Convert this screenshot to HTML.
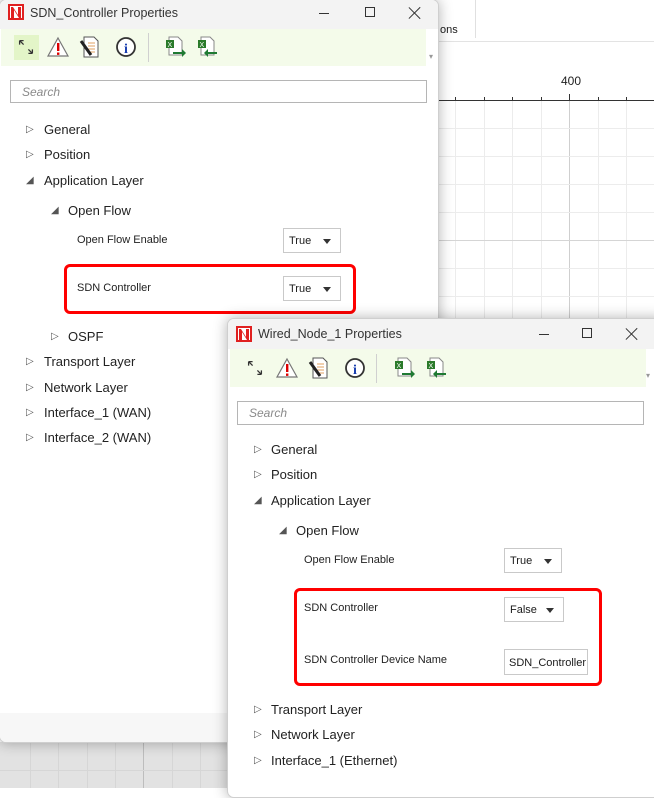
<!DOCTYPE html>
<html><head><meta charset="utf-8"><style>
*{margin:0;padding:0;box-sizing:border-box}
body{width:654px;height:788px;overflow:hidden;background:#fff;font-family:"Liberation Sans","DejaVu Sans",sans-serif;position:relative;color:#1a1a1a}
.a{position:absolute}
.vl{position:absolute;top:42px;width:1px;background:#ececec}
.hl{position:absolute;left:438px;height:1px;background:#ececec;width:216px}
.win{position:absolute;background:#fff;box-shadow:0 0 14px rgba(0,0,0,.3);border:1px solid #cfcfcf;border-radius:7px;overflow:hidden}
.title{position:absolute;left:0;top:0;right:0;height:29px;background:#f3f3f3;font-size:12.5px;color:#333}
.tb{position:absolute;background:#f4fbea}
.srch{position:absolute;border:1px solid #b5b5b5;background:#fff;font-size:12px;font-style:italic;color:#8a8a8a;padding:4px 0 0 11px}
.t{position:absolute;font-size:13px;color:#222;white-space:nowrap}
.p{position:absolute;font-size:11px;color:#222;white-space:nowrap}
.tri{position:absolute;font-size:10px;color:#555}
.dd{position:absolute;border:1px solid #c9c9c9;background:#fff;font-size:11px;padding:6px 0 0 5px}
.dd:after{content:"";position:absolute;right:9px;top:10px;border-left:4px solid transparent;border-right:4px solid transparent;border-top:5px solid #333}
.red{position:absolute;border:3px solid #f00;border-radius:6px}
.x{position:absolute;width:14px;height:14px}
.x:before,.x:after{content:"";position:absolute;left:6px;top:-1px;width:1.3px;height:16px;background:#333;transform:rotate(45deg)}
.x:after{transform:rotate(-45deg)}
</style></head><body>
<div class="a" style="left:475px;top:0;width:1px;height:38px;background:#e0e0e0"></div>
<div class="a" style="left:438px;top:41px;width:216px;height:1px;background:#e3e3e3"></div>
<div class="a" style="left:440px;top:24px;font-size:11px">ons</div>
<div class="a" style="left:561px;top:74px;font-size:12px;color:#222">400</div>
<div class="vl" style="left:455px;top:100px;height:220px"></div>
<div class="vl" style="left:484px;top:100px;height:220px"></div>
<div class="vl" style="left:512px;top:100px;height:220px"></div>
<div class="vl" style="left:541px;top:100px;height:220px"></div>
<div class="vl" style="left:569px;top:100px;height:220px;background:#cfcfcf"></div>
<div class="vl" style="left:598px;top:100px;height:220px"></div>
<div class="vl" style="left:626px;top:100px;height:220px"></div>
<div class="hl" style="top:128px"></div><div class="hl" style="top:156px"></div><div class="hl" style="top:184px"></div><div class="hl" style="top:212px"></div><div class="hl" style="top:240px;background:#d5d5d5"></div><div class="hl" style="top:268px"></div><div class="hl" style="top:296px"></div>
<div class="a" style="left:438px;top:100px;width:216px;height:1px;background:#333"></div>
<div class="a" style="left:455px;top:97px;width:1px;height:3px;background:#333"></div>
<div class="a" style="left:484px;top:97px;width:1px;height:3px;background:#333"></div>
<div class="a" style="left:512px;top:97px;width:1px;height:3px;background:#333"></div>
<div class="a" style="left:541px;top:97px;width:1px;height:3px;background:#333"></div>
<div class="a" style="left:569px;top:94px;width:1px;height:6px;background:#333"></div>
<div class="a" style="left:598px;top:97px;width:1px;height:3px;background:#333"></div>
<div class="a" style="left:626px;top:97px;width:1px;height:3px;background:#333"></div>
<div class="a" style="left:0;top:742px;width:230px;height:46px;background:#e2e2e2"></div>
<div class="a" style="left:30px;top:742px;width:1px;height:46px;background:#d6d6d6"></div>
<div class="a" style="left:58px;top:742px;width:1px;height:46px;background:#d6d6d6"></div>
<div class="a" style="left:87px;top:742px;width:1px;height:46px;background:#d6d6d6"></div>
<div class="a" style="left:115px;top:742px;width:1px;height:46px;background:#d6d6d6"></div>
<div class="a" style="left:143px;top:742px;width:1px;height:46px;background:#bdbdbd"></div>
<div class="a" style="left:172px;top:742px;width:1px;height:46px;background:#d6d6d6"></div>
<div class="a" style="left:200px;top:742px;width:1px;height:46px;background:#d6d6d6"></div>
<div class="a" style="left:0;top:770px;width:230px;height:1px;background:#d6d6d6"></div>

<div class="win" style="left:-1px;top:-1px;width:440px;height:744px">
 <div class="title">
  <svg class="a" style="left:8px;top:4px" width="16" height="16"><rect width="16" height="16" fill="#e02020"/><rect x="2" y="2" width="12" height="12" fill="#fff"/><path d="M3 14V3h2l5 8V3h3v11h-2L6 6v8z" fill="#e02020"/></svg>
  <div class="a" style="left:30px;top:6px">SDN_Controller Properties</div>
  <div class="a" style="left:319px;top:13px;width:10px;height:1px;background:#333"></div>
  <div class="a" style="left:365px;top:7px;width:10px;height:10px;border:1px solid #333"></div>
  <div class="x" style="left:408px;top:6px"></div>
 </div>
 <div class="tb" style="left:1px;top:29px;width:425px;height:37px"></div>
 <div class="a" style="left:14px;top:35px;width:25px;height:25px;background:#e3f5c8"></div>
 <div class="a" style="left:148px;top:33px;width:1px;height:29px;background:#d0d0d0"></div>
 <div class="a" style="left:429px;top:52px;font-size:8px;color:#999">▾</div>
 <div class="srch" style="left:10px;top:80px;width:417px;height:23px">Search</div>
 <div class="t" style="left:44px;top:122px">General</div>
 <div class="t" style="left:44px;top:147px">Position</div>
 <div class="t" style="left:44px;top:173px">Application Layer</div>
 <div class="t" style="left:68px;top:203px">Open Flow</div>
 <div class="p" style="left:77px;top:234px">Open Flow Enable</div>
 <div class="dd" style="left:283px;top:228px;width:58px;height:25px">True</div>
 <div class="red" style="left:64px;top:264px;width:292px;height:50px"></div>
 <div class="p" style="left:77px;top:282px">SDN Controller</div>
 <div class="dd" style="left:283px;top:276px;width:58px;height:25px">True</div>
 <div class="t" style="left:68px;top:329px">OSPF</div>
 <div class="t" style="left:44px;top:354px">Transport Layer</div>
 <div class="t" style="left:44px;top:380px">Network Layer</div>
 <div class="t" style="left:44px;top:405px">Interface_1 (WAN)</div>
 <div class="t" style="left:44px;top:430px">Interface_2 (WAN)</div>
 <div class="tri" style="left:26px;top:124px">▷</div><div class="tri" style="left:26px;top:149px">▷</div><div class="tri" style="left:26px;top:175px">◢</div>
 <div class="tri" style="left:51px;top:205px">◢</div><div class="tri" style="left:51px;top:331px">▷</div>
 <div class="tri" style="left:26px;top:356px">▷</div><div class="tri" style="left:26px;top:382px">▷</div><div class="tri" style="left:26px;top:407px">▷</div><div class="tri" style="left:26px;top:432px">▷</div>
 <div class="a" style="left:0;top:713px;width:440px;height:31px;background:#f7f7f7"></div>
</div>

<div class="win" style="left:227px;top:318px;width:440px;height:480px">
 <div class="title" style="height:30px">
  <svg class="a" style="left:8px;top:7px" width="16" height="16"><rect width="16" height="16" fill="#e02020"/><rect x="2" y="2" width="12" height="12" fill="#fff"/><path d="M3 14V3h2l5 8V3h3v11h-2L6 6v8z" fill="#e02020"/></svg>
  <div class="a" style="left:30px;top:8px">Wired_Node_1 Properties</div>
  <div class="a" style="left:311px;top:15px;width:10px;height:1px;background:#333"></div>
  <div class="a" style="left:354px;top:9px;width:10px;height:10px;border:1px solid #333"></div>
  <div class="x" style="left:397px;top:8px"></div>
 </div>
 <div class="tb" style="left:2px;top:30px;width:416px;height:38px"></div>
 <div class="a" style="left:148px;top:35px;width:1px;height:29px;background:#d0d0d0"></div>
 <div class="a" style="left:418px;top:52px;font-size:8px;color:#999">▾</div>
 <div class="srch" style="left:9px;top:82px;width:407px;height:24px">Search</div>
 <div class="t" style="left:43px;top:123px">General</div>
 <div class="t" style="left:43px;top:148px">Position</div>
 <div class="t" style="left:43px;top:174px">Application Layer</div>
 <div class="t" style="left:68px;top:204px">Open Flow</div>
 <div class="p" style="left:76px;top:235px">Open Flow Enable</div>
 <div class="dd" style="left:276px;top:229px;width:58px;height:25px">True</div>
 <div class="red" style="left:66px;top:269px;width:308px;height:98px"></div>
 <div class="p" style="left:76px;top:283px">SDN Controller</div>
 <div class="dd" style="left:276px;top:278px;width:60px;height:25px">False</div>
 <div class="p" style="left:76px;top:335px">SDN Controller Device Name</div>
 <div class="a" style="left:276px;top:330px;width:84px;height:26px;border:1px solid #c9c9c9;font-size:11px;padding:7px 0 0 4px;overflow:hidden;white-space:nowrap">SDN_Controller</div>
 <div class="t" style="left:43px;top:383px">Transport Layer</div>
 <div class="t" style="left:43px;top:408px">Network Layer</div>
 <div class="t" style="left:43px;top:434px">Interface_1 (Ethernet)</div>
 <div class="tri" style="left:26px;top:125px">▷</div><div class="tri" style="left:26px;top:150px">▷</div><div class="tri" style="left:26px;top:176px">◢</div>
 <div class="tri" style="left:51px;top:206px">◢</div>
 <div class="tri" style="left:26px;top:385px">▷</div><div class="tri" style="left:26px;top:410px">▷</div><div class="tri" style="left:26px;top:436px">▷</div>
</div>

<svg class="a" style="left:0;top:0" width="654" height="788">
 <defs>
  <g id="ic">
   <path d="M-8-8l5 0M-8-8l0 5M-8-8l5 5M8 8l-5 0M8 8l0-5M8 8l-5-5" stroke="#333" stroke-width="1.6" fill="none" transform="translate(10,10) scale(.8)"/>
   <path d="M42 1l10 18h-20z" fill="#fff" stroke="#777" stroke-width="1.2"/><rect x="41" y="6" width="2.4" height="8" fill="#d00"/><rect x="41" y="15.5" width="2.4" height="2.4" fill="#d00"/>
   <path d="M68 0h10l4 4v16h-14z" fill="#fff" stroke="#555"/><path d="M72 6h7M72 9h7M72 12h7M72 15h7" stroke="#e0a060"/><path d="M65 4l10 14" stroke="#222" stroke-width="3"/>
   <circle cx="110" cy="10" r="9" fill="#fff" stroke="#333" stroke-width="1.8"/><text x="110" y="16" font-size="14" font-weight="bold" font-family="Liberation Serif" fill="#1a3fb0" text-anchor="middle">i</text>
   <path d="M153 0h9l4 4v14h-13z" fill="#fff" stroke="#888"/><rect x="150" y="3" width="8" height="8" fill="#2a7a2a"/><text x="151.5" y="10" font-size="7" fill="#fff" font-family="Liberation Sans">X</text><path d="M157 15h9v-3l4 4-4 4v-3h-9z" fill="#1f7a33"/>
   <path d="M185 0h9l4 4v14h-13z" fill="#fff" stroke="#888"/><rect x="182" y="3" width="8" height="8" fill="#2a7a2a"/><text x="183.5" y="10" font-size="7" fill="#fff" font-family="Liberation Sans">X</text><path d="M201 15h-9v-3l-4 4 4 4v-3h9z" fill="#1f7a33"/>
  </g>
 </defs>
 <use href="#ic" x="16" y="37"/>
 <use href="#ic" x="245" y="358"/>
</svg>
</body></html>
